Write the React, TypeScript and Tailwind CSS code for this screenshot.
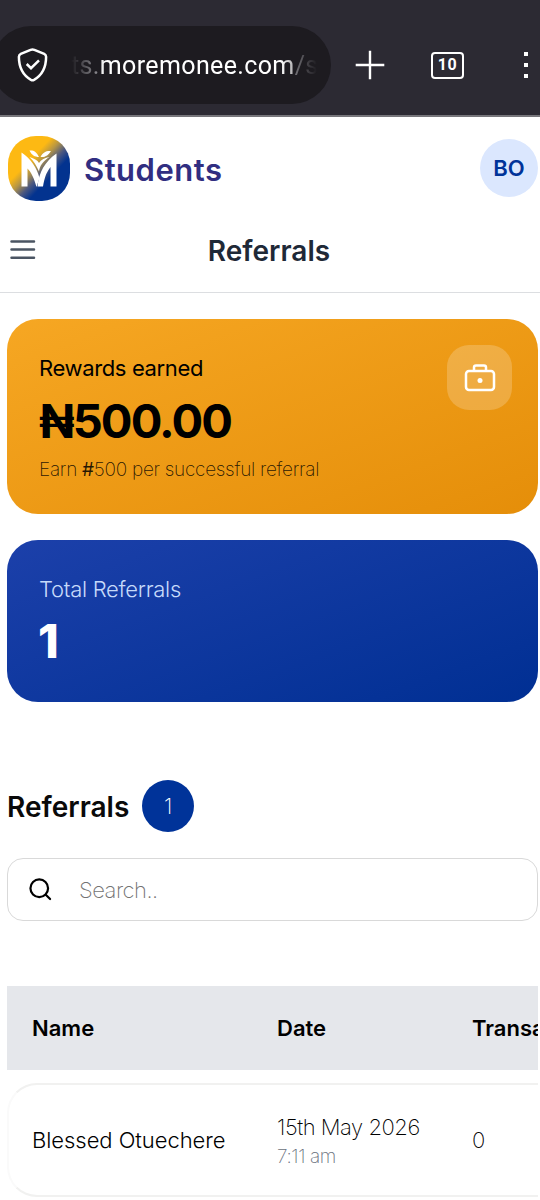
import clsx from 'clsx'

const BrowserBar = () => {
  return (
    <div className="flex h-[117px] items-start overflow-hidden border-b-2 border-[#77767b] bg-[#2c2a33] pt-[26px] text-white">
      <div className="-ml-2 flex h-[78px] w-[339px] shrink-0 items-center rounded-full bg-[#1d1b20] pl-[24px]">
        <svg width="34" height="36" viewBox="0 0 34 36" fill="none" stroke="currentColor">
          <path
            d="M14.6 2.9 4.8 6.9Q2.9 7.8 2.9 9.8C2.9 20.5 6.5 28 15 32.9Q16.5 33.7 18 32.9C26.5 28 30.1 20.5 30.1 9.8Q30.1 7.8 28.2 6.9L18.4 2.9Q16.5 2.1 14.6 2.9Z"
            strokeWidth="2.5"
          />
          <path d="m10.7 17 4.3 4.2 8-7.9" strokeWidth="2.5" />
        </svg>
        <div className="ml-[21px] w-[246px] overflow-hidden pt-px whitespace-nowrap font-[Roboto,sans-serif] text-[25px] tracking-[0.37px] [mask-image:linear-gradient(to_right,transparent,black_34px,black_210px,transparent)]">
          <span className="text-[#aaa9ae]">ts.</span>moremonee.com
          <span className="text-[#aaa9ae]">/s</span>
        </div>
      </div>
      <div className="flex h-[78px] items-center">
        <svg className="ml-6" width="30" height="30" viewBox="0 0 30 30" stroke="currentColor" strokeWidth="2.4">
          <path d="M15 .7v28.6M.7 15h28.6" />
        </svg>
        <div className="ml-[46px] flex h-[27px] w-[33px] items-center justify-center rounded-[4px] border-2 border-white font-[Roboto,sans-serif] text-[16px] leading-none font-bold tracking-[0.5px]">
          10
        </div>
        <div className="ml-[60px] flex w-1 shrink-0 flex-col gap-[7px]">
          <span className="size-1 bg-white" />
          <span className="size-1 bg-white" />
          <span className="size-1 bg-white" />
        </div>
      </div>
    </div>
  )
}

const Logo = () => {
  return (
    <svg width="62" height="65" viewBox="0 0 62 65">
      <defs>
        <linearGradient id="logo" x1="0" y1="0" x2="1" y2="1">
          <stop offset="0.36" stopColor="#fdb913" />
          <stop offset="0.46" stopColor="#b59545" />
          <stop offset="0.56" stopColor="#4c5880" />
          <stop offset="0.66" stopColor="#03338f" />
        </linearGradient>
      </defs>
      <rect width="62" height="65" rx="28" fill="url(#logo)" />
      <g fill="#fff">
        <path d="M13.5 16.5C23 23 29 32 31.5 42L28.5 51C26 42 23 36 19.5 32.5V50.5H13.5Z" />
        <path d="M48.5 17.5V50.5H42.5V31C38 37 36.5 42 35 50.5H29.5C31 36 37 25.5 48.5 17.5Z" />
        <path d="M41.5 21C35 25 31.5 30 31 35.5C28.5 30 26 25 21.5 21C26 22.5 29.5 24 31 27C33 24 37 21.5 41.5 21Z" />
        <path d="M31 21C28.5 15.5 25.5 14 21.5 14.5C23.5 19 27 21 31 21ZM32.5 21C35 16 38.5 14.5 43 15C40.5 19 37.5 21.5 32.5 21Z" />
      </g>
    </svg>
  )
}

const Header = () => {
  return (
    <header className="h-[176px] border-b border-[#dcdee1] pt-[19px]">
      <div className="flex h-[65px] items-center pr-[2px] pl-2">
        <Logo />
        <span className="ml-[14px] pt-1 text-[31px] font-semibold tracking-[0.5px] text-[#312e81]">
          Students
        </span>
        <div className="mr-0 mb-px ml-auto flex size-[58px] items-center justify-center rounded-full bg-[#dbe7fe] pt-px text-[22px] font-semibold text-[#003399]">
          BO
        </div>
      </div>
      <div className="mt-[22px] grid h-[54px] grid-cols-[1fr_auto_1fr] items-center pr-3 pl-[10px]">
        <svg width="26" height="22" viewBox="0 0 26 22" stroke="#4b5563" strokeWidth="2.5" strokeLinecap="round">
          <path d="M1.5 2.5h22.5M1.5 10.6h22.5M1.5 18.7h22.5" />
        </svg>
        <h1 className="pt-[2px] text-[28px] font-semibold text-[#1f2937]">Referrals</h1>
      </div>
    </header>
  )
}

const RewardsCard = () => {
  return (
    <section className="flex h-[195px] justify-between rounded-[31px] bg-linear-[160deg] from-[#f6a723] to-[#e58e09] pt-[26px] pr-[26px] pl-8 text-black">
      <div className="pt-2">
        <p className="text-[22px] leading-[31px] tracking-[-0.36px]">Rewards earned</p>
        <p className="mt-[11px] text-[47px] leading-[52px] font-bold tracking-[-1.9px]">₦500.00</p>
        <p className="mt-[9px] text-[19px] leading-[28px] font-extralight tracking-[-0.29px] text-black/85">
          Earn <span className="font-normal">#</span>500 per successful referral
        </p>
      </div>
      <div className="flex size-[65px] items-center justify-center rounded-[22px] bg-white/20">
        <svg width="32" height="30" viewBox="0 0 32 30" fill="none" stroke="#fff" strokeWidth="2.5">
          <rect x="2" y="8" width="28" height="19" rx="3" />
          <path d="M10 8V4.5Q10 2.5 12 2.5h8q2 0 2 2V8" />
          <circle cx="16" cy="17.5" r="2.5" fill="#fff" stroke="none" />
        </svg>
      </div>
    </section>
  )
}

const TotalCard = () => {
  return (
    <section className="mt-[26px] h-[162px] rounded-[31px] bg-linear-[160deg] from-[#1c40aa] to-[#002f93] pt-[34px] pl-8">
      <p className="text-[22px] leading-[31px] font-light tracking-[-0.28px] text-[#c6dafa]">Total Referrals</p>
      <p className="mt-[10px] -ml-px text-[47px] leading-[52px] font-extrabold text-white">1</p>
    </section>
  )
}

const columns = ['Name', 'Date', 'Transactions']

const ReferralsTable = () => {
  return (
    <div className="mt-[65px] overflow-hidden">
      <div className="w-[700px]">
        <div className="flex h-[84px] items-center bg-[#e5e7eb] pt-px pl-[25px] text-[22px] font-semibold text-black">
          {columns.map((column, i) => (
            <div key={column} className={clsx('shrink-0', i === 0 ? 'w-[245px]' : 'w-[195px]')}>
              {column}
            </div>
          ))}
        </div>
        <div className="mt-[13px] flex h-[114px] items-center rounded-[30px] border-2 border-[#f1f1f0] border-l-[#fafafa] pl-[23px] text-[22px] text-black">
          <div className="w-[245px] shrink-0 font-light tracking-[-0.05px]">Blessed Otuechere</div>
          <div className="w-[195px] shrink-0 pt-[2px] font-extralight whitespace-nowrap">
            <p className="leading-[30px] tracking-[-0.46px]">15th May 2026</p>
            <p className="text-[19px] leading-[29px] tracking-[-0.4px] text-[#6b7280]">7:11 am</p>
          </div>
          <div className="font-extralight">0</div>
        </div>
      </div>
    </div>
  )
}

export default function App() {
  return (
    <div className="h-[1200px] w-[540px] overflow-hidden bg-white font-[Inter,sans-serif]">
      <BrowserBar />
      <Header />
      <main className="pt-[26px] pr-[2px] pl-[7px]">
        <RewardsCard />
        <TotalCard />
        <div className="mt-[78px] flex h-[52px] items-center">
          <h2 className="pt-[2px] text-[28px] font-semibold text-[#0a0a0a]">Referrals</h2>
          <span className="ml-[13px] flex size-[52px] items-center justify-center rounded-full bg-[#003399] text-[22px] font-extralight text-white">
            1
          </span>
        </div>
        <div className="mt-[26px] flex h-[63px] items-center rounded-[16px] border border-[#d9d9d9] pl-[21px]">
          <svg width="23" height="23" viewBox="0 0 24 24" fill="none" stroke="#000" strokeWidth="2.3" strokeLinecap="round">
            <circle cx="10.7" cy="10.7" r="9.2" />
            <path d="m17.5 17.5 4.5 4.5" />
          </svg>
          <span className="ml-[27px] pt-px text-[22px] font-extralight tracking-[-0.5px] text-[#737373]">Search..</span>
        </div>
        <ReferralsTable />
      </main>
    </div>
  )
}
